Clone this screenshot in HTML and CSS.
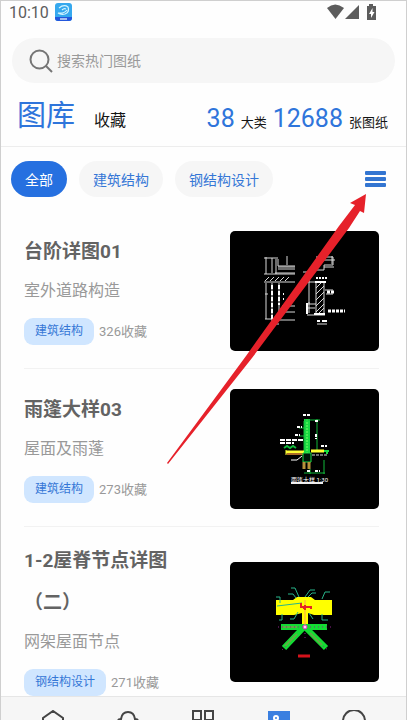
FILE: index.html
```html
<!DOCTYPE html>
<html lang="zh-CN">
<head>
<meta charset="utf-8">
<meta name="viewport" content="width=device-width, initial-scale=1">
<title>图库</title>
<link rel="stylesheet" href="styles.css">
</head>
<body>
<div class="app">
  <div class="status">
    <span class="clock">10:10</span>
    <svg class="app-icon" width="17" height="18" viewBox="0 0 17 18" aria-hidden="true">
      <rect width="17" height="18" rx="3" fill="#35a8ee"/>
      <path d="M0 14h17v1a3 3 0 0 1-3 3H3a3 3 0 0 1-3-3z" fill="#2357dc"/>
      <path d="M4 5Q9 1 13 4Q15 9 10 11Q6 12 3 10Q9 11 12 7M7 7Q9 5 11 6" fill="none" stroke="#d5f6ff" stroke-width="1.2"/>
      <path d="M5 16h7" stroke="#fff" stroke-width="1.2"/>
    </svg>
    <svg class="signals" width="50" height="18" viewBox="0 0 50 18" fill="#5c5c5c" aria-hidden="true">
      <path d="M0 5Q8 -2 17 5L8.500 16z"/>
      <path d="M32 2V16H18z"/>
      <path d="M42 1h4v2h3v14H40V3h2z"/>
      <path d="M45.500 5L42 11h2v4l3.500-6h-2z" fill="#fff"/>
    </svg>
  </div>

  <label class="search">
    <svg width="24" height="24" viewBox="0 0 24 24" fill="none" stroke="#757575" stroke-width="2" aria-hidden="true">
      <circle cx="10.500" cy="10.500" r="9"/><path d="M17 17l6 6"/>
    </svg>
    <input type="search" placeholder="搜索热门图纸" aria-label="搜索热门图纸">
  </label>

  <header class="heading">
    <a class="tab tab-current" href="#gallery">图库</a>
    <a class="tab" href="#saved">收藏</a>
    <p class="totals"><b>38</b><span>大类</span><b>12688</b><span>张图纸</span></p>
  </header>

  <div class="filters">
    <button class="chip chip-on" type="button">全部</button>
    <button class="chip" type="button">建筑结构</button>
    <button class="chip" type="button">钢结构设计</button>
    <button class="menu" type="button" aria-label="菜单"><i></i><i></i><i></i></button>
  </div>

  <main class="list">
    <article class="item">
      <div class="info">
        <h2>台阶详图01</h2>
        <p class="sub">室外道路构造</p>
        <p class="meta"><span class="tag">建筑结构</span><span>326收藏</span></p>
      </div>
      <svg class="thumb" viewBox="0 0 149 120" aria-hidden="true">
        <g fill="none" stroke="#d8d8d8">
          <path d="M36 26v17M34 27h14M42 27v15M46 28v15M48 28v7h17M48 38h17M45 42h20M34 43h31M57 25v9M48 36h17"/>
          <path d="M34 51h31M36 52v36M42 52v38M49 52v34M35 63h3M35 88h14M52 75h13M52 81h13M49 89h16M42 93h7"/>
          <path d="M35 50l4-4M40 50l4-4M45 50l4-4M50 50l4-4M55 50l4-4"/>
          <path d="M86 26h17v8h-9v5h-7M91 29h14M102 25v8M73 41h6M94 36h10"/>
          <path d="M86 51h8v32h-8zM79 49v24M76 51h20M77 73h9M95 59h8M96 63h7M77 77h8M77 84h18M87 93h10M79 71v11"/>
          <path d="M86 57l6-6M86 63l8-8M86 69l8-8M86 75l8-8M86 81l8-8M88 83l6-6"/>
        </g>
        <g fill="none" stroke="#fff" stroke-width="2">
          <path d="M42 54v34M49 54v20" stroke-dasharray="4 2"/>
          <path d="M86 47h11" stroke-dasharray="2 1"/>
          <path d="M97 61h7M98 80h17" stroke-width="3" stroke-dasharray="3 1"/>
          <path d="M77 72v11M87 90h3M92 90h5M85 51h11M84 83h11M53 63h1M53 68h1"/>
        </g>
      </svg>
    </article>

    <article class="item">
      <div class="info">
        <h2>雨篷大样03</h2>
        <p class="sub">屋面及雨蓬</p>
        <p class="meta"><span class="tag">建筑结构</span><span>273收藏</span></p>
      </div>
      <svg class="thumb" viewBox="0 0 149 120" aria-hidden="true">
        <path d="M77 30v36" stroke="#18d943" stroke-width="6"/>
        <path d="M77 30v34" stroke="#79ff69" stroke-dasharray="2 1"/>
        <g fill="none" stroke="#11b83b">
          <path d="M87 30v31M75 31h15M74 32v30M94 71v14M74 84h21M74 39h-5M74 47h-5M80 80v5"/>
          <path d="M54 59l3-2 3 2 3-2 3 2" stroke-width="2"/>
        </g>
        <path d="M56 63h18M81 62h13" stroke="#ff3" stroke-width="3"/>
        <path d="M56 61v5" stroke="#ff3"/>
        <path d="M57 65h16" stroke="#ac6b28" stroke-width="2"/>
        <path d="M73 64h8v9h-8z" fill="#00170a" stroke="#1ada45"/>
        <path d="M74 73v7M79 73v7" stroke="#b8943a" stroke-width="3"/>
        <g fill="none" stroke="#fff" stroke-width="2">
          <path d="M73 26h8M67 38h5M65 46h5M85 32h3M86 45v5M91 57h6M77 82h4M85 82h5" stroke-dasharray="3 1"/>
          <path d="M50 51h24M50 54h14" stroke-dasharray="5 1"/>
          <path d="M61 71h6l5-4" stroke-width="1"/>
        </g>
        <path d="M94 62h5M97 62v3" stroke="#17df42" stroke-width="2"/>
        <path d="M61 94h32" stroke="#eee" stroke-width="2"/>
        <path d="M82 66h16" stroke="#ddd" stroke-dasharray="3 1"/>
        <text class="cad-label" x="61" y="93">雨篷大样 1:30</text>
      </svg>
    </article>

    <article class="item">
      <div class="info">
        <h2>1-2屋脊节点详图（二）</h2>
        <p class="sub">网架屋面节点</p>
        <p class="meta"><span class="tag">钢结构设计</span><span>271收藏</span></p>
      </div>
      <svg class="thumb" viewBox="0 0 149 120" aria-hidden="true">
        <path d="M46 38h17l4-3h14l4 3h17v15H84l-6-2v12h-6V51l-8 2H46z" fill="#ff0"/>
        <path d="M51 65h46" stroke="#13dc33" stroke-width="6"/>
        <path d="M73 66L54 86M76 66l20 20" stroke="#13dc33" stroke-width="6"/>
        <path d="M52 65h15M55 84l12-12M92 83L80 71" stroke="#5fae45" stroke-width="2"/>
        <g fill="none" stroke="#28b58b">
          <path d="M69 35l-4-9h-4M66 36l-3-4h-5M75 35l5-7h5M78 35l4-4h4M92 37l3-7h5M50 41v-6h-4M72 41l-25 3M49 58h3v-6M68 50l-4 7h-4M79 51l4 6M92 52v6h6"/>
        </g>
        <path d="M75 38v28" stroke="#ff9e52"/>
        <path d="M48 65h55M75 67v12M52 88l5-5M93 84l5 4" stroke="#8b248b" stroke-dasharray="1 3"/>
        <path d="M71 41v4h3v2M76 45h5v2M75 43v5" fill="none" stroke="#e42424" stroke-width="2"/>
        <circle cx="75" cy="65" r="2" fill="#ffd4ff" stroke="#de35b6"/>
        <path d="M68 94h12" stroke="#d4121b" stroke-width="3"/>
      </svg>
    </article>
  </main>

  <nav class="dock" aria-label="主导航">
    <a href="#home" aria-label="首页"><svg width="24" height="24" viewBox="0 0 24 24"><path d="M2 23V8l10-7 10 7v15z"/></svg></a>
    <a href="#alerts" aria-label="消息"><svg width="24" height="24" viewBox="0 0 24 24"><path d="M2 20V11Q2 9 5 9Q6 2 12 2Q18 2 19 9Q22 9 22 11V20z"/></svg></a>
    <a href="#apps" aria-label="应用"><svg width="24" height="24" viewBox="0 0 24 24"><path d="M2 1h8v9H2zM14 1h8v9h-8zM2 14h8v8H2zM14 14h8v8h-8z"/></svg></a>
    <a href="#gallery" aria-label="图库"><svg width="24" height="24" viewBox="0 0 24 24"><path class="solid" d="M1 1h22v21H1z"/><circle class="dot" cx="9" cy="8" r="2"/></svg></a>
    <a href="#me" aria-label="我的"><svg width="24" height="24" viewBox="0 0 24 24"><circle cx="12" cy="11" r="11"/></svg></a>
  </nav>

  <svg class="pointer" width="200" height="271" viewBox="0 0 200 271" aria-hidden="true">
    <path d="M199 0L183 9L188 11L172 32L79 162L0 269L1 270L85 164L182 34L193 17L197 19z" fill="#e6212a"/>
  </svg>
</div>
</body>
</html>
```
FILE: styles.css
```css
* { box-sizing: border-box; }

body {
  margin: 0;
  background: #fff;
  font-family: Roboto, "Noto Sans CJK SC", sans-serif;
  color: #151515;
}

h2, p { margin: 0; }
a { color: inherit; text-decoration: none; }
button, input { font: inherit; border: 0; padding: 0; }

.app {
  position: relative;
  display: flex;
  flex-direction: column;
  height: 100vh;
  overflow: hidden;
  background: #fefefe;
  border: 1px solid #cfcfcf;
  border-bottom: 0;
}

.status {
  display: flex;
  align-items: center;
  flex: none;
  height: 22px;
  margin-bottom: 15px;
  padding: 0 29px 0 8px;
}
.clock { font-size: 16px; color: #5c5c5c; }
.app-icon { margin-left: 6px; }
.signals { margin-left: auto; }

.search {
  display: flex;
  align-items: center;
  flex: none;
  gap: 4px;
  height: 45px;
  margin: 0 11px;
  padding: 0 17px;
  border-radius: 23px;
  background: #f6f6f6;
}
.search input {
  flex: 1;
  min-width: 0;
  background: none;
  outline: 0;
  font-size: 14px;
}
.search input::placeholder { color: #999; opacity: 1; }

.heading {
  display: flex;
  align-items: flex-start;
  flex: none;
  height: 64px;
  padding: 9px 18px 0 16px;
  border-bottom: 1px solid #ededed;
  line-height: 48px;
}
.tab { padding-top: 5px; font-size: 16px; }
.tab-current {
  margin-right: 19px;
  padding-top: 0;
  font-size: 29px;
  color: #2f75db;
}
.totals {
  display: flex;
  align-items: baseline;
  gap: 6px;
  margin-left: auto;
  padding-top: 3px;
  font-size: 13px;
  white-space: nowrap;
}
.totals b { font-size: 25px; font-weight: 400; color: #2f75db; }

.filters {
  display: flex;
  align-items: center;
  flex: none;
  gap: 12px;
  padding: 14px 20px 14px 10px;
}
.chip {
  height: 36px;
  padding: 0 14px;
  border-radius: 18px;
  background: #f6f6f6;
  color: #3577d6;
  font-size: 14px;
}
.chip-on { background: #2670e0; color: #fff; }
.menu {
  display: grid;
  gap: 2px;
  width: 21px;
  margin-left: auto;
  background: none;
}
.menu i { height: 4px; border-radius: 1px; background: #3375d1; }

.list {
  flex: 1;
  min-height: 0;
  overflow: hidden;
  padding: 0 27px 0 23px;
}
.item {
  display: flex;
  align-items: center;
  justify-content: space-between;
  padding: 13px 0;
  border-bottom: 1px solid #f2f2f2;
}
.info { width: 160px; padding-bottom: 4px; }
.info h2 {
  font-size: 19px;
  line-height: 42px;
  font-weight: 700;
  color: #636363;
}
.sub { font-size: 16px; line-height: 36px; color: #999; }
.meta {
  display: flex;
  align-items: center;
  gap: 5px;
  margin-top: 9px;
  font-size: 13px;
  line-height: 27px;
  color: #999;
  white-space: nowrap;
}
.tag {
  padding: 0 11px;
  border-radius: 9px;
  background: #d0e6ff;
  color: #3577d6;
  font-size: 12px;
}
.thumb {
  flex: none;
  width: 149px;
  height: 120px;
  margin: 7px 0 4px;
  border-radius: 5px;
  background: #000;
}
.cad-label { fill: #fff; font-size: 6px; }

.dock {
  display: flex;
  justify-content: space-around;
  flex: none;
  height: 24px;
  overflow: hidden;
  padding: 13px 14px 0;
  border-top: 1px solid #e6e6e6;
  background: #f6f6f6;
}
.dock svg {
  display: block;
  fill: none;
  stroke: #444;
  stroke-width: 2;
}
.dock .solid { fill: #3a7fe0; stroke: none; }
.dock .dot { stroke: #fff; }

.pointer {
  position: absolute;
  left: 166px;
  top: 193px;
}
```
